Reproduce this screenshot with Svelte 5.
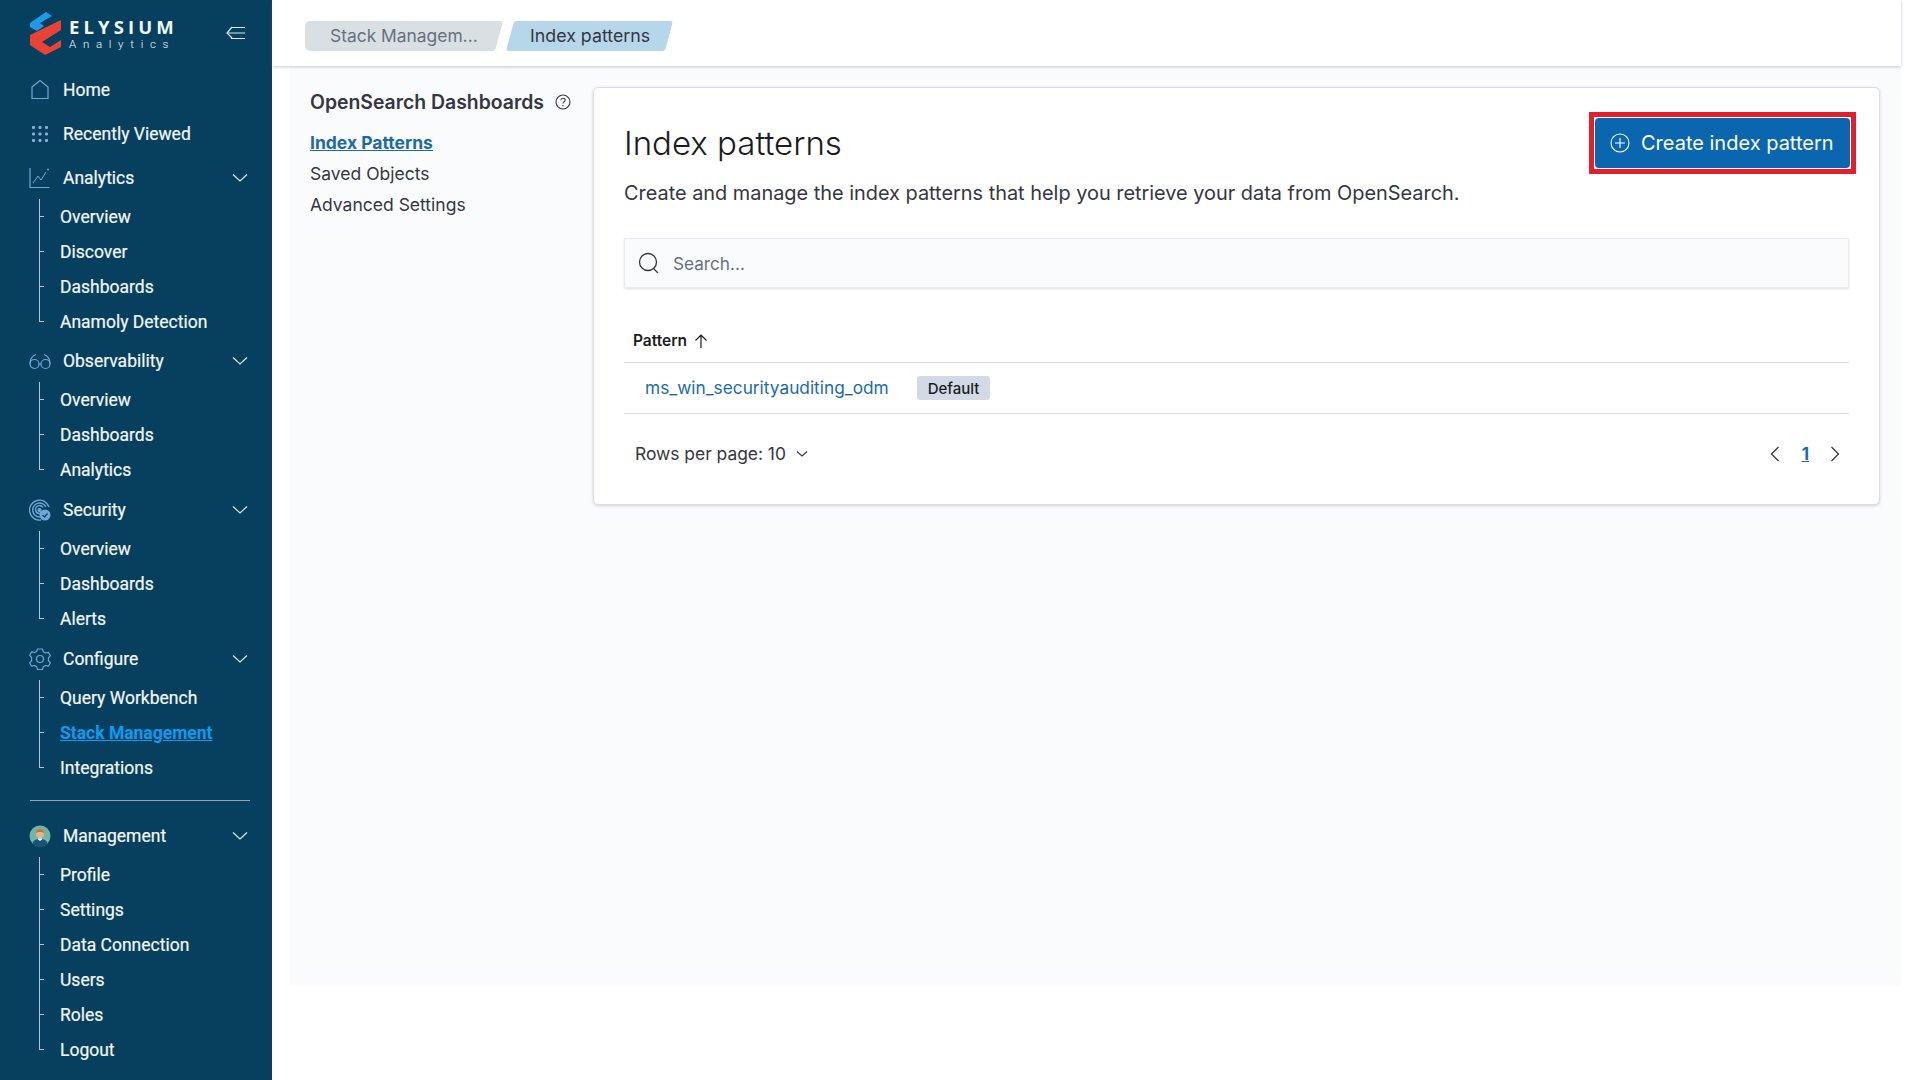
<script lang="ts">
  const groups = [
    { label: 'Analytics', icon: 'chart', items: ['Overview', 'Discover', 'Dashboards', 'Anamoly Detection'] },
    { label: 'Observability', icon: 'glasses', items: ['Overview', 'Dashboards', 'Analytics'] },
    { label: 'Security', icon: 'radar', items: ['Overview', 'Dashboards', 'Alerts'] },
    { label: 'Configure', icon: 'gear', items: ['Query Workbench', 'Stack Management', 'Integrations'] }
  ];
  const account = ['Profile', 'Settings', 'Data Connection', 'Users', 'Roles', 'Logout'];
  const dots = [3, 9.5, 16];
</script>

{#snippet chevron()}
  <svg class="chev" width="18" height="10" viewBox="0 0 18 10" fill="none" stroke="#dbe8f0" stroke-width="1.2"><path d="M2 1.500 9 8l7-6.500" /></svg>
{/snippet}

{#snippet groupIcon(name)}
  <svg class="nav-icon" width="22" height="22" viewBox="0 0 22 22" fill="none" stroke="#6fa8d6" stroke-width="1.2" stroke-linejoin="round">
    {#if name === 'chart'}
      <path d="M1 1v19.500h19.500" /><path d="M4 16l5-7 3 4 5-8" stroke-width="1" /><circle cx="19" cy="2.500" r="1" fill="#6fa8d6" stroke="none" />
    {:else if name === 'glasses'}
      <path d="M1 14C1 9 3 6 7 4.500" /><path d="M21 14c0-5-2-8-6-9.500" /><circle cx="5.500" cy="14" r="4.500" /><circle cx="16.500" cy="14" r="4.500" /><path d="M10 14h2" />
    {:else if name === 'radar'}
      <path d="M12 21a10 10 0 1 1 8-13" stroke-width="1.400" /><path d="M11 18a7 7 0 1 1 6-10" stroke-width="1.400" /><path d="M11 14.500a4 4 0 1 1 3-6" stroke-width="1.400" /><circle cx="10.500" cy="11" r="1.500" fill="#6fa8d6" />
      <circle cx="16" cy="16" r="5.500" fill="#6fa8d6" stroke="none" /><path d="M13.500 16l2 2 3-3.500" stroke="#073f5e" />
    {:else if name === 'gear'}
      <path d="M8.500 1.500h5l.8 2.800 2.200 1.200 2.900-.7 2 3.400-2 2.300v2.500l2 2.300-2 3.400-2.900-.7-2.200 1.200-.8 2.800h-5l-.8-2.800-2.200-1.200-2.900.7-2-3.400 2-2.300V10l-2-2.300 2-3.400 2.900.7 2.200-1.200z" transform="translate(0 -.5)" /><circle cx="11" cy="11" r="3.500" />
    {/if}
  </svg>
{/snippet}

{#snippet subList(items)}
  <ul class="sub">
    {#each items as item}
      <li class="sub-item">
        <span class="tick"></span>
        <a class:active={item === 'Stack Management'} href="#top">{item}</a>
      </li>
    {/each}
  </ul>
{/snippet}

<div class="shell">
  <aside class="sidebar">
    <div class="brand">
      <svg width="32" height="44" viewBox="0 0 32 44">
        <path d="M0 11 16 0l6 4-12 7 4 3-7 5-7-4z" fill="#1e9be8" />
        <path d="M0 23 31 8v10L12 30l8 5 11-7v7l-16 8-15-10z" fill="#ea4335" />
      </svg>
      <div class="brand-text">
        <span class="brand-name">ELYSIUM</span>
        <span class="brand-sub">Analytics</span>
      </div>
      <svg class="collapse" width="20" height="14" viewBox="0 0 20 14" fill="none" stroke="#dbe8f0" stroke-width="1.2">
        <path d="M6 1 1 7l5 5" /><path d="M1 7h18M5 1.500h14M5 12.500h14" />
      </svg>
    </div>

    <nav class="nav">
      <div class="nav-row">
        <svg class="nav-icon" width="22" height="22" viewBox="0 0 22 22" fill="none" stroke="#6fa8d6" stroke-width="1.2"><path d="M3 8 11 1.500 19 8v11.500H3z" /></svg>
        <span>Home</span>
      </div>
      <div class="nav-row">
        <svg class="nav-icon" width="22" height="22" viewBox="0 0 22 22" fill="#7fb2d9">
          {#each dots as y}
            {#each dots as x}
              <rect x={x} y={y} width="3" height="3" rx="1" />
            {/each}
          {/each}
        </svg>
        <span>Recently Viewed</span>
      </div>

      {#each groups as group}
        <div class="nav-row">
          {@render groupIcon(group.icon)}
          <span>{group.label}</span>
          {@render chevron()}
        </div>
        {@render subList(group.items)}
      {/each}

      <hr class="divider" />

      <div class="nav-row">
        <svg class="nav-icon" width="22" height="22" viewBox="0 0 22 22">
          <circle cx="11" cy="11" r="10.500" fill="#6fb8a2" />
          <path d="M3.500 18.500c1-3.500 4-4.500 7.500-4.500s6.500 1 7.500 4.500A10.500 10.500 0 0 1 3.500 18.500z" fill="#17527a" />
          <circle cx="11" cy="9" r="4" fill="#eeb08e" />
          <path d="M7 8c0-3 2-4 4-4s4 1 4 4c-2-1.500-6-1.500-8 0z" fill="#d9693c" />
          <path d="M9 14.500l2 1.500 2-1.500v-1H9z" fill="#fff" />
        </svg>
        <span>Management</span>
        {@render chevron()}
      </div>
      {@render subList(account)}
    </nav>
  </aside>

  <div class="main">
    <header class="topbar">
      <span class="crumb crumb-parent">Stack Managem...</span>
      <span class="crumb crumb-current">Index patterns</span>
    </header>

    <div class="content">
      <section class="side">
        <h2 class="side-title">
          OpenSearch Dashboards
          <svg width="16" height="16" viewBox="0 0 16 16" fill="none" stroke="#343741" stroke-width="1.100">
            <circle cx="8" cy="8" r="7" /><path d="M5.800 6.200C5.900 4.900 6.800 4.200 8 4.200c1.300 0 2.200.8 2.200 1.900 0 1.800-2.200 1.700-2.200 3.500" /><path d="M8 11v1.200" />
          </svg>
        </h2>
        <a class="side-link current" href="#top">Index Patterns</a>
        <a class="side-link" href="#top">Saved Objects</a>
        <a class="side-link" href="#top">Advanced Settings</a>
      </section>

      <section class="card">
        <div class="card-head">
          <h1>Index patterns</h1>
          <div class="btn-mark">
            <button class="create">
              <svg width="20" height="20" viewBox="0 0 20 20" fill="none" stroke="#fff" stroke-width="1.100"><circle cx="10" cy="10" r="9" /><path d="M10 5v10M5 10h10" /></svg>
              Create index pattern
            </button>
          </div>
        </div>
        <p class="lead">Create and manage the index patterns that help you retrieve your data from OpenSearch.</p>

        <div class="search">
          <svg width="22" height="22" viewBox="0 0 22 22" fill="none" stroke="#343741" stroke-width="1.300"><circle cx="10" cy="10" r="8.500" /><path d="M15.500 16.500 20 21" /></svg>
          <span>Search...</span>
        </div>

        <div class="th">
          Pattern
          <svg width="14" height="14" viewBox="0 0 14 14" fill="none" stroke="#1a1c21" stroke-width="1.200"><path d="M7 14V1M1.500 6.500 7 1l5.500 5.500" /></svg>
        </div>
        <div class="tr">
          <a class="pattern-link" href="#top">ms_win_securityauditing_odm</a>
          <span class="badge">Default</span>
        </div>
        <div class="pager">
          <span class="rows">
            Rows per page: 10
            <svg width="12" height="8" viewBox="0 0 12 8" fill="none" stroke="#343741" stroke-width="1.100"><path d="M1 1.500 6 6l5-4.500" /></svg>
          </span>
          <span class="pages">
            <svg class="prev" width="10" height="16" viewBox="0 0 10 16" fill="none" stroke="#343741" stroke-width="1.300"><path d="M8.500 1 1.500 8l7 7" /></svg>
            <a class="page-num" href="#top">1</a>
            <svg width="10" height="16" viewBox="0 0 10 16" fill="none" stroke="#343741" stroke-width="1.300"><path d="M1.500 1l7 7-7 7" /></svg>
          </span>
        </div>
      </section>
    </div>
  </div>
</div>

<style>
  :global(body) {
    margin: 0;
    background: #fff;
  }

  .shell {
    display: flex;
    width: 1920px;
    height: 1080px;
    overflow: hidden;
    font-family: Inter, "Liberation Sans", sans-serif;
    color: #343741;
  }

  .sidebar {
    width: 272px;
    flex-shrink: 0;
    background: #073f5e;
    color: #f2f7fa;
    font-family: Roboto, "Liberation Sans", sans-serif;
    font-size: 17.5px;
    -webkit-text-stroke: 0.2px #f2f7fa;
  }

  .brand {
    display: flex;
    align-items: center;
    height: 68px;
    padding-left: 30px;
    box-sizing: border-box;
  }

  .brand-text {
    display: flex;
    flex-direction: column;
    gap: 4px;
    margin-left: 7px;
    line-height: 1;
    -webkit-text-stroke: 0;
  }

  .brand-name {
    font-family: "Open Sans", sans-serif;
    font-weight: 700;
    font-size: 18.5px;
    line-height: 16px;
    letter-spacing: 4.100px;
  }

  .brand-sub {
    font-size: 11.500px;
    line-height: 10px;
    letter-spacing: 6.700px;
    font-weight: 300;
  }

  .collapse {
    margin-left: 48px;
    margin-top: -3px;
  }

  .nav {
    display: flex;
    flex-direction: column;
  }

  .nav-row {
    display: flex;
    align-items: center;
    height: 44px;
    padding: 0 23px 0 29px;
  }

  .nav-row span {
    flex: 1;
    margin-left: 12px;
  }

  .nav-icon {
    flex-shrink: 0;
  }

  .chev {
    flex-shrink: 0;
  }

  .sub {
    list-style: none;
    margin: -1px 0 1px 39px;
    padding: 0;
    position: relative;
  }

  .sub:first-of-type {
    margin-bottom: 0;
  }

  .sub::before {
    content: '';
    position: absolute;
    left: 0;
    top: 0;
    bottom: 17px;
    border-left: 1px solid #a9c6da;
  }

  .sub-item {
    display: flex;
    align-items: center;
    height: 35px;
    position: relative;
  }

  .tick {
    width: 5px;
    border-top: 1px solid #a9c6da;
  }

  .sub-item a {
    margin-left: 16px;
    color: inherit;
    text-decoration: none;
  }

  .sub-item a.active {
    color: #0d9bf2;
    font-weight: 700;
    text-decoration: underline;
    -webkit-text-stroke: 0;
  }

  .divider {
    margin: 14px 22px 13px 30px;
    border: 0;
    border-top: 1px solid #8ba6b6;
  }

  .main {
    flex: 1;
    display: flex;
    flex-direction: column;
    height: 985px;
    padding-right: 19px;
  }

  .topbar {
    display: flex;
    gap: 11px;
    align-items: center;
    height: 66px;
    flex-shrink: 0;
    box-sizing: border-box;
    padding: 6px 0 0 33px;
    background: #fff;
    box-shadow: 0 1px 3px rgba(90, 110, 130, 0.35);
    position: relative;
    z-index: 1;
  }

  .crumb {
    display: flex;
    align-items: center;
    height: 30px;
    padding-bottom: 2px;
    box-sizing: border-box;
    position: relative;
    isolation: isolate;
  }

  .crumb::before {
    content: '';
    position: absolute;
    inset: 0;
    z-index: -1;
    border-radius: 3px;
    transform: skewX(-15deg);
  }

  .crumb-parent {
    width: 194px;
    padding-left: 25px;
    color: #69707d;
    font-size: 17.400px;
  }

  .crumb-parent::before {
    left: 12px;
    background: #d8e0e4;
  }

  .crumb-parent::after {
    content: '';
    position: absolute;
    left: 0;
    top: 0;
    bottom: 0;
    width: 40px;
    z-index: -1;
    border-radius: 5px 0 0 5px;
    background: #d8e0e4;
  }

  .crumb-current {
    width: 159px;
    padding-left: 20px;
    color: #343741;
    font-size: 17.800px;
  }

  .crumb-current::before {
    background: #b6d6ea;
  }

  .content {
    flex: 1;
    margin-left: 18px;
    background: #fafbfd;
    display: flex;
    padding: 21px 21px 0 20px;
    gap: 21px;
  }

  .side {
    width: 262px;
    flex-shrink: 0;
    display: flex;
    flex-direction: column;
    align-items: flex-start;
  }

  .side-title {
    display: flex;
    align-items: center;
    gap: 11px;
    margin: 1px 0 11px;
    font-size: 19.400px;
    font-weight: 600;
    line-height: 28px;
    color: #343741;
    white-space: nowrap;
  }

  .side-link {
    font-size: 17.500px;
    line-height: 31px;
    color: #343741;
    text-decoration: none;
  }

  .side-link.current {
    color: #1a6aad;
    font-weight: 700;
    text-decoration: underline;
  }

  .card {
    flex: 1;
    align-self: flex-start;
    height: 418px;
    box-sizing: border-box;
    padding: 23px 30px 0;
    background: #fff;
    border: 1px solid #d8dde6;
    border-radius: 5px;
    box-shadow: 0 1px 3px rgba(80, 100, 130, 0.25);
  }

  .card-head {
    display: flex;
    justify-content: space-between;
    align-items: center;
    height: 64px;
    margin-right: -7px;
  }

  h1 {
    margin: 0;
    font-size: 33px;
    font-weight: 300;
    color: #1a1c21;
  }

  .btn-mark {
    border: 5px solid #e31e2d;
    padding: 1px;
    background: #fff;
  }

  .create {
    display: flex;
    align-items: center;
    gap: 11px;
    width: 255px;
    height: 50px;
    padding: 0 0 0 15px;
    border: 0;
    border-radius: 4px;
    background: #0b66b0;
    color: #fff;
    font: 400 20px Inter, sans-serif;
  }

  .lead {
    margin: 4px 0 0;
    font-size: 19.900px;
    line-height: 28px;
    color: #343741;
  }

  .search {
    display: flex;
    align-items: center;
    gap: 13px;
    height: 50px;
    box-sizing: border-box;
    margin-top: 31px;
    padding-left: 13px;
    background: #fafbfd;
    border: 1px solid #e9ecf1;
    box-shadow: 0 1px 2px rgba(80, 100, 130, 0.2);
    font-size: 17.200px;
    color: #69707d;
  }

  .th {
    display: flex;
    align-items: center;
    gap: 7px;
    height: 75px;
    box-sizing: border-box;
    padding: 31px 0 0 9px;
    border-bottom: 1px solid #d3dae6;
    font-size: 15.500px;
    font-weight: 600;
    color: #1a1c21;
  }

  .tr {
    display: flex;
    align-items: center;
    gap: 28px;
    height: 51px;
    box-sizing: border-box;
    padding-left: 21px;
    border-bottom: 1px solid #d3dae6;
  }

  .pattern-link {
    margin-bottom: 2px;
    font-size: 17.300px;
    color: #1a6aad;
    text-decoration: none;
  }

  .badge {
    display: flex;
    align-items: center;
    height: 24px;
    padding: 0 11px;
    border-radius: 3px;
    background: #d3dae6;
    color: #1a1c21;
    font-size: 15px;
    font-weight: 500;
  }

  .pager {
    display: flex;
    justify-content: space-between;
    align-items: center;
    height: 79px;
    padding: 0 9px 0 11px;
  }

  .rows {
    display: flex;
    align-items: center;
    gap: 10px;
    font-size: 17.400px;
    color: #343741;
  }

  .pages {
    display: flex;
    align-items: center;
    gap: 21px;
  }

  .prev {
    margin-right: 1px;
  }

  .page-num {
    color: #1a6aad;
    font-size: 17px;
    font-weight: 700;
  }
</style>
